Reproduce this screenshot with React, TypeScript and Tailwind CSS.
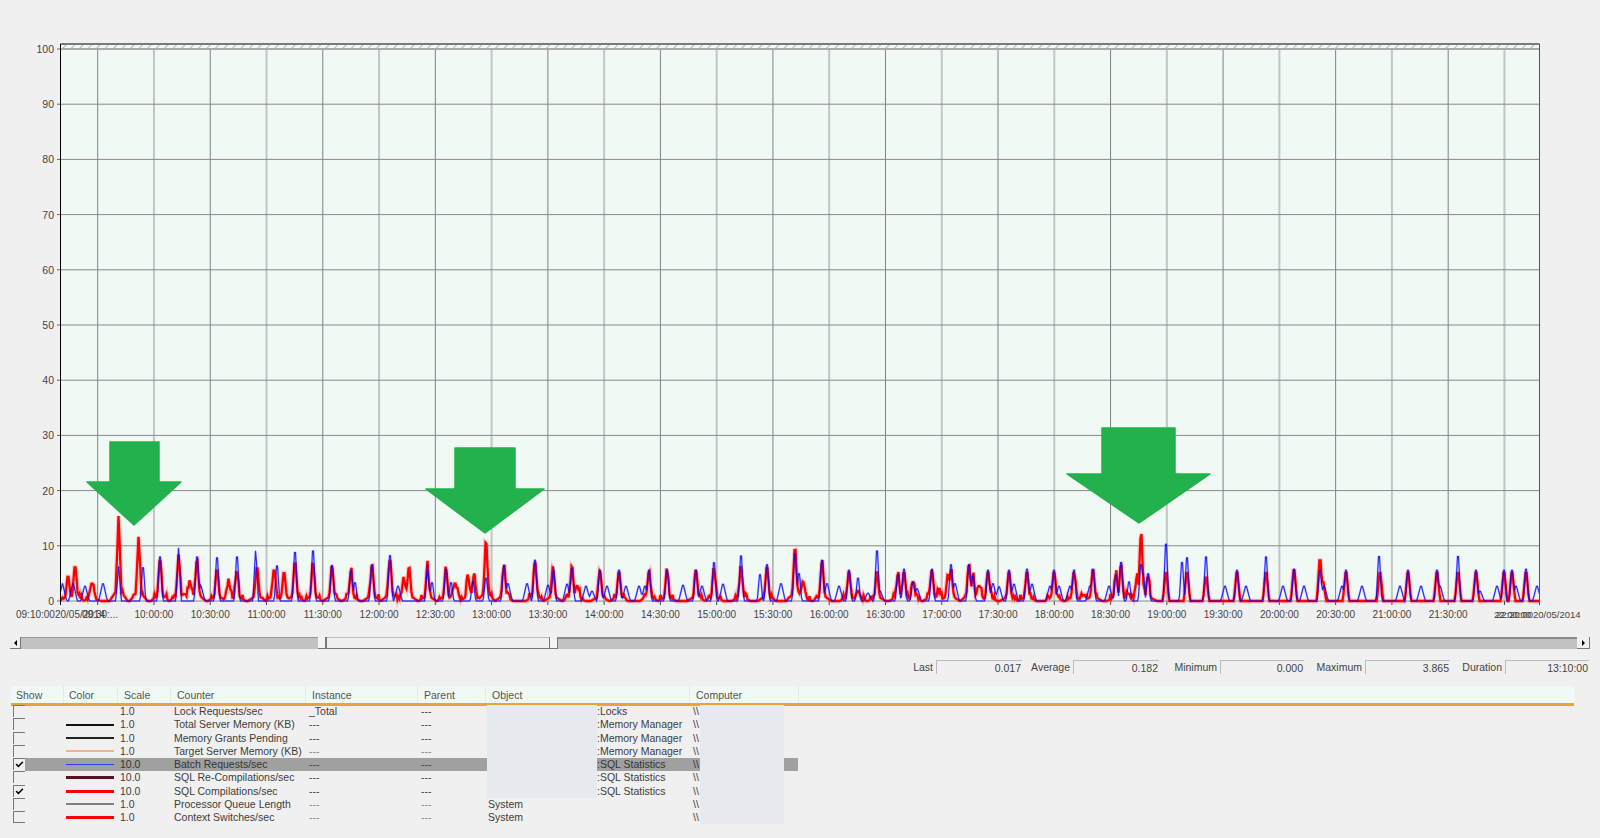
import { Check } from "lucide-react";

// counter peaks read off the graph: [x in px, value]
const RED: [number, number][] = [
  [68, 5.2], [75, 7.2], [92, 3.5], [118.6, 15.5], [138.6, 12], [160, 8.5], [178.6, 8.7], [190, 3.5], [197, 8.3], [217, 6.5],
  [228.6, 3.5], [236.8, 6], [257, 7], [274, 6.5], [284, 6], [295, 8], [313, 7.5], [332, 7], [351, 6], [372, 7], [390, 8.5],
  [403.6, 4.5], [409, 7], [427.5, 6.5], [446, 6.5], [455, 3.5], [468, 5], [474, 5.3], [486, 11.6], [504, 7], [535, 8], [553, 6.5],
  [572, 6.4], [577, 3], [600, 6], [619, 6], [649, 6], [667, 6], [696, 6], [714, 6], [741, 6.5], [767, 7], [795, 10.5], [803, 3.5],
  [822, 8], [849, 6], [858, 2], [877, 5.5], [898, 5.5], [904, 6], [913, 4], [932, 6], [939, 1.7], [948, 5.5], [951, 6], [969, 7.5],
  [973, 5], [979, 3], [988, 6], [1009, 6], [1027, 6], [1054, 6], [1074, 5.5], [1084, 1.2], [1093, 6.5], [1116, 5.5], [1121, 7],
  [1128, 1.5], [1137, 5], [1141, 13.5], [1148, 5], [1166, 6], [1187, 6], [1206, 5], [1237, 6], [1266, 6], [1294, 6.5], [1320, 8.7],
  [1323, 4], [1346, 6], [1380, 6], [1408, 6], [1437, 6], [1458, 6], [1476, 6], [1504, 6], [1512, 6], [1526, 6],
];

const BLUE: [number, number][] = [
  [62.5, 3.2], [73, 3.5], [85, 3], [103, 3.5], [118.6, 6.5], [143, 7.3], [160, 9.7], [178.6, 10], [197, 9.7], [200.7, 3], [217, 9.5],
  [237, 9.7], [255.7, 9.8], [277, 7.7], [295, 10.7], [313, 11], [332, 7.8], [351, 6.8], [355, 4], [372, 8], [390, 10], [398, 3],
  [427.5, 6.8], [432, 4], [446, 7], [451, 4], [473, 4.3], [486, 5], [504, 7.8], [508, 3.5], [527, 3.5], [535, 9], [548, 3.2], [553.6, 6.5],
  [567, 3.4], [572, 7.2], [586, 3], [592, 2], [600, 6.8], [607, 3], [619, 6.8], [626, 3], [639, 3], [645, 3], [649, 6.8], [667, 6.8],
  [683, 3.2], [696, 6.8], [702, 3], [714, 8.4], [723, 3.4], [741, 9.9], [760, 5.8], [767, 8], [781, 3.5], [795, 10.5], [799, 6], [822, 9],
  [827, 3.5], [839, 3], [849, 6.8], [858, 5], [868, 1.6], [877, 11], [880, 2], [898, 5.8], [904, 7], [913, 4.2], [917, 2.5], [932, 7],
  [951, 8], [955, 3.5], [969, 8], [973, 5.8], [988, 6.8], [993, 3.5], [999, 2.9], [1009, 6.8], [1014, 3.4], [1027, 7], [1032, 3.4],
  [1050, 3], [1054, 6.8], [1059, 3], [1070, 3], [1074, 6.8], [1090, 3], [1093, 7], [1109, 3], [1116, 5.8], [1121, 8.5], [1129, 4.2],
  [1141, 8], [1143, 6], [1148, 6], [1166, 12.5], [1182, 8.5], [1187, 9.5], [1206, 9.7], [1225, 3], [1237, 6.8], [1246, 3], [1266, 9.7],
  [1283, 3], [1294, 7], [1304, 3], [1320, 6.8], [1324, 3], [1342, 3], [1346, 6.8], [1362, 3], [1379, 9.8], [1400, 3], [1408, 6.8],
  [1421, 3], [1437, 6.8], [1440, 3], [1458, 9.8], [1476, 6.8], [1480, 2], [1497, 3], [1504, 6.8], [1512, 6.8], [1516, 3], [1526, 7], [1537, 3],
];

const LEFT = 60.5;
const RIGHT = 1539.5;
const ZERO = 601;
const UNIT = 5.52;

function buildLine(peaks: [number, number][], halfWidth: number, noisy: boolean) {
  let seed = noisy ? 77 : 13;
  const next = () => {
    seed = (seed * 1103515 + 12345) % 2147483648;
    return seed / 2147483648;
  };
  const pts: string[] = [];
  for (let x = LEFT; x <= RIGHT; x += 1) {
    let v = 0;
    let near = false;
    for (const [px, pv] of peaks) {
      const d = Math.abs(x - px);
      const w = pv < 4 ? halfWidth + 1.5 : halfWidth;
      v = Math.max(v, pv * (1 - d / w));
      if (noisy && px < 1150) {
        v = Math.max(v, pv * 0.16 * (1 - d / 9));
        if (d < 7) near = true;
      }
    }
    if (near) {
      const n = next();
      if (n > 0.6) v += (n - 0.6) * 2.4;
    }
    pts.push(`${x.toFixed(1)},${(ZERO - Math.max(v, 0) * UNIT).toFixed(1)}`);
  }
  return pts.join(" ");
}

const redLine = buildLine(RED, 3.2, true);
const blueLine = buildLine(BLUE, 2.8, false);

const GRID_X = Array.from({ length: 26 }, (_, i) => 97.7 + i * 56.27);
const TIME_LABELS = [
  "10:00:00", "10:30:00", "11:00:00", "11:30:00", "12:00:00", "12:30:00", "13:00:00", "13:30:00", "14:00:00", "14:30:00",
  "15:00:00", "15:30:00", "16:00:00", "16:30:00", "17:00:00", "17:30:00", "18:00:00", "18:30:00", "19:00:00", "19:30:00",
  "20:00:00", "20:30:00", "21:00:00", "21:30:00",
];

const ARROWS = [
  "110,442 159,442 159,482 181,482 134,525 87,482 110,482",
  "455,448 515,448 515,489 544,489 485,533 426,489 455,489",
  "1102,428 1175,428 1175,474 1210,474 1139,523 1067,474 1102,474",
];

function Graph() {
  return (
    <svg width="1600" height="630" viewBox="0 0 1600 630" className="block">
      <defs>
        <pattern id="hatch" width="6" height="6" patternUnits="userSpaceOnUse" patternTransform="rotate(45)">
          <line x1="0" y1="0" x2="0" y2="6" stroke="#777" strokeWidth="1" />
        </pattern>
      </defs>
      <rect x={LEFT} y="44" width={RIGHT - LEFT} height="557" fill="#f1f9f5" />
      <rect x={LEFT} y="45" width={RIGHT - LEFT} height="4" fill="url(#hatch)" />

      {GRID_X.map((x, i) => (
        <g key={x}>
          <line x1={x} y1="49" x2={x} y2={ZERO} stroke={i % 2 ? "#c4c4c4" : "#808080"} strokeWidth={i % 2 ? 2 : 1} />
          <line x1={x} y1={ZERO} x2={x} y2="605" stroke="#444" />
        </g>
      ))}
      {Array.from({ length: 11 }, (_, i) => {
        const y = ZERO - i * 55.2;
        return (
          <g key={i}>
            <line x1={LEFT} y1={y} x2={RIGHT} y2={y} stroke={i === 10 ? "#aaa" : "#888"} strokeWidth={i === 10 ? 2 : 1} />
            <line x1="57" y1={y} x2={LEFT} y2={y} stroke="#666" />
            <text x="54" y={y + 4} textAnchor="end" className="fill-[#444] text-[10.5px]">
              {i * 10}
            </text>
          </g>
        );
      })}

      <polyline points={redLine} fill="none" stroke="#ff7070" strokeOpacity="0.35" strokeWidth="4.5" />
      <polyline points={blueLine} fill="none" stroke="#8080ff" strokeOpacity="0.45" strokeWidth="2" />
      <polyline points={redLine} fill="none" stroke="#ff0000" strokeWidth="2.3" />
      <polyline points={blueLine} fill="none" stroke="#0000ff" strokeOpacity="0.8" strokeWidth="1.1" />

      <line x1={LEFT} y1="44" x2={RIGHT} y2="44" stroke="#000" />
      <line x1={LEFT} y1="44" x2={LEFT} y2={ZERO + 4} stroke="#000" />
      <line x1={RIGHT} y1="44" x2={RIGHT} y2={ZERO + 4} stroke="#555" />

      {ARROWS.map((p) => (
        <polygon key={p} points={p} fill="#22b14c" stroke="#22b14c" strokeWidth="1.5" strokeLinejoin="round" />
      ))}

      <g className="fill-[#444] text-[10px]">
        <text x="16" y="618">09:10:0020/05/2014</text>
        <text x="82" y="618">09:30:...</text>
        {TIME_LABELS.map((t, i) => (
          <text key={t} x={GRID_X[i + 1]} y="618" textAnchor="middle">
            {t}
          </text>
        ))}
        <text x="1494" y="618" className="text-[9.5px]">22:00:00</text>
        <text x="1496" y="618" className="text-[9.5px]">22:20:0020/05/2014</text>
      </g>
    </svg>
  );
}

function ScrollBar() {
  return (
    <div className="flex h-[12px] ml-[10px] w-[1580px] mt-[7px]">
      <div className="w-[11px] bg-[#f0f0f0] border-r border-b border-[#777] flex items-center justify-center">
        <div className="border-y-[3px] border-y-transparent border-r-[3px] border-r-black" />
      </div>
      <div className="w-[297px] bg-[#c2c2c2] border-t border-[#999]" />
      <div className="w-[9px] bg-[#f4f4f4] border-r-2 border-b border-[#777]" />
      <div className="w-[222px] bg-[#f0f0f0] border-y border-t-[#bbb] border-b-[#777]" />
      <div className="w-[9px] bg-[#f4f4f4] border-x border-b border-[#777]" />
      <div className="w-[1019px] bg-[#c2c2c2] border-t-2 border-[#888]" />
      <div className="w-[13px] bg-[#f0f0f0] border-r border-b border-[#777] flex items-center justify-center">
        <div className="border-y-[3px] border-y-transparent border-l-[3px] border-l-black" />
      </div>
    </div>
  );
}

const STATS = [
  { label: "Last", value: "0.017", lw: "w-[22px]", box: "w-[86px]" },
  { label: "Average", value: "0.182", lw: "w-[48px]", box: "w-[86px]" },
  { label: "Minimum", value: "0.000", lw: "w-[58px]", box: "w-[84px]" },
  { label: "Maximum", value: "3.865", lw: "w-[58px]", box: "w-[85px]" },
  { label: "Duration", value: "13:10:00", lw: "w-[52px]", box: "w-[84px]" },
];

function Stats() {
  return (
    <div className="flex justify-end h-[14px] mt-[11px] pr-[11px] text-[10.5px] leading-[14px] text-[#444]">
      {STATS.map((s) => (
        <div key={s.label} className="flex gap-[3px]">
          <span className={`${s.lw} text-right`}>{s.label}</span>
          <span className={`${s.box} text-right border-t border-l border-[#bbb] pr-[1px]`}>{s.value}</span>
        </div>
      ))}
    </div>
  );
}

const COLUMNS = "grid-cols-[53px_56px_54px_135px_112px_66px_110px_96px_7px_84px_14px]";

const HEADERS = [
  { name: "Show", w: "w-[53px]", pl: "pl-[5px]" },
  { name: "Color", w: "w-[54px]", pl: "pl-[5px]" },
  { name: "Scale", w: "w-[53px]", pl: "pl-[6px]" },
  { name: "Counter", w: "w-[135px]", pl: "pl-[6px]" },
  { name: "Instance", w: "w-[112px]", pl: "pl-[6px]" },
  { name: "Parent", w: "w-[68px]", pl: "pl-[6px]" },
  { name: "Object", w: "w-[204px]", pl: "pl-[6px]" },
  { name: "Computer", w: "w-[109px]", pl: "pl-[6px]" },
];

type Row = {
  checked?: boolean;
  line: string;
  scale: string;
  counter: string;
  instance?: string;
  object: string;
  system?: boolean;
  selected?: boolean;
  dim?: boolean;
};

const ROWS: Row[] = [
  { line: "h-px bg-[#f4f4f4]", scale: "1.0", counter: "Lock Requests/sec", instance: "_Total", object: ":Locks" },
  { line: "h-[2px] bg-[#111]", scale: "1.0", counter: "Total Server Memory (KB)", object: ":Memory Manager" },
  { line: "h-[2px] bg-[#222]", scale: "1.0", counter: "Memory Grants Pending", object: ":Memory Manager" },
  { line: "h-[2px] bg-[#f4b08c]", scale: "1.0", counter: "Target Server Memory (KB)", object: ":Memory Manager", dim: true },
  { checked: true, line: "h-px bg-[#2a3cf0]", scale: "10.0", counter: "Batch Requests/sec", object: ":SQL Statistics", selected: true },
  { line: "h-[3px] bg-[#5a1020]", scale: "10.0", counter: "SQL Re-Compilations/sec", object: ":SQL Statistics" },
  { checked: true, line: "h-[3px] bg-[#ff0000]", scale: "10.0", counter: "SQL Compilations/sec", object: ":SQL Statistics" },
  { line: "h-[2px] bg-[#808080]", scale: "1.0", counter: "Processor Queue Length", object: "System", system: true, dim: true },
  { line: "h-[3px] bg-[#ff0000]", scale: "1.0", counter: "Context Switches/sec", object: "System", system: true, dim: true },
];

function CounterRow({ row, last }: { row: Row; last: boolean }) {
  const sel = row.selected ? "bg-[#a0a0a0] text-[#333]" : "";
  const dash = row.dim ? "text-[#888]" : "text-[#444]";
  return (
    <div className={`grid ${COLUMNS} h-[13.25px] leading-[13.25px] items-stretch`}>
      <div className="flex pl-[2px]">
        <div
          className={`w-[12px] h-[12px] border-t border-l border-[#777] shrink-0 flex items-center justify-center ${last ? "border-b" : ""}`}
        >
          {row.checked && <Check className="w-[9px] h-[9px] text-black" strokeWidth={4} />}
        </div>
        <div className={`flex-1 ${sel}`} />
      </div>
      <div className={`flex items-center pl-[2px] pr-[6px] ${sel}`}>
        <div className={`w-full ${row.line}`} />
      </div>
      <div className={sel}>{row.scale}</div>
      <div className={sel}>{row.counter}</div>
      <div className={`${sel} ${row.instance ? "" : dash}`}>{row.instance ?? "---"}</div>
      <div className={`${sel} ${dash}`}>---</div>
      {row.system ? <div className="pl-[1px]">{row.object}</div> : <div className="bg-[#e6e9ee]" />}
      <div className={sel}>{row.system ? "" : row.object}</div>
      <div className={sel}>\\</div>
      <div className="bg-[#e6e9ee]" />
      <div className={sel} />
    </div>
  );
}

function CounterTable() {
  return (
    <div className="ml-[11px] mt-[12px] text-[10.5px] text-[#3c3c3c]">
      <div className="flex h-[20px] w-[1563px] bg-[#f1f9f5] border-b-[3px] border-[#e8a33f] leading-[19px] text-[#555]">
        {HEADERS.map((h) => (
          <div key={h.name} className={`${h.w} ${h.pl} border-r border-[#e4ebe7]`}>
            {h.name}
          </div>
        ))}
      </div>
      <div className="-mt-[1px]">
        {ROWS.map((r, i) => (
          <CounterRow key={r.counter} row={r} last={i === ROWS.length - 1} />
        ))}
      </div>
    </div>
  );
}

export default function App() {
  return (
    <div className="w-[1600px] h-[838px] overflow-hidden bg-[#f0f0f0] font-['Liberation_Sans',sans-serif]">
      <Graph />
      <ScrollBar />
      <Stats />
      <CounterTable />
    </div>
  );
}
